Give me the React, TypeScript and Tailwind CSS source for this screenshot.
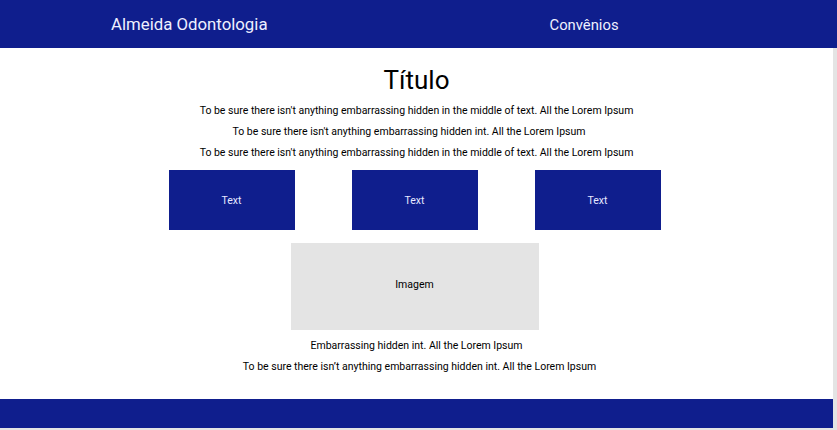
export default function App() {
  const line1 = "To be sure there isn't anything embarrassing hidden in the middle of text. All the Lorem Ipsum";
  const line2 = "To be sure there isn't anything embarrassing hidden int. All the Lorem Ipsum";

  return (
    <div className="w-[837px] min-h-[430px] bg-[#e4e4e4] font-['Roboto',sans-serif] overflow-hidden">
      <header className="w-[837px] h-12 bg-[#0f1e8d] flex items-center text-[#eef0ff]">
        <span className="ml-[111px] mt-[2px] text-[16.8px]">Almeida Odontologia</span>
        <span className="ml-[282px] mt-[2px] text-[14.8px]">Convênios</span>
      </header>

      <main className="w-[833px] h-[351px] bg-white flex flex-col items-center text-black">
        <h1 className="mt-[17px] text-[26px] leading-[30px]">Título</h1>
        <div className="mt-[5px] flex flex-col items-center text-[10.5px] leading-[21px]">
          <p>{line1}</p>
          <p className="mr-[15px]">{line2}</p>
          <p>{line1}</p>
        </div>

        <div className="mt-[7px] mr-[4px] flex gap-[57px]">
          {[0, 1, 2].map((i) => (
            <div
              key={i}
              className="w-[126px] h-[60px] pt-[2px] bg-[#0f1e8d] text-[#e6e8ff] text-[10.5px] flex items-center justify-center"
            >
              Text
            </div>
          ))}
        </div>

        <div className="mt-[13px] mr-[4px] w-[248px] h-[87px] pb-[3px] bg-[#e4e4e4] text-[10.5px] flex items-center justify-center">
          Imagem
        </div>

        <div className="mt-[5px] flex flex-col items-center text-[10.5px] leading-[21px]">
          <p>Embarrassing hidden int. All the Lorem Ipsum</p>
          <p className="ml-[6px]">To be sure there isn’t anything embarrassing hidden int. All the Lorem Ipsum</p>
        </div>
      </main>

      <footer className="w-[833px] h-[29px] bg-[#0f1e8d]" />
    </div>
  );
}
